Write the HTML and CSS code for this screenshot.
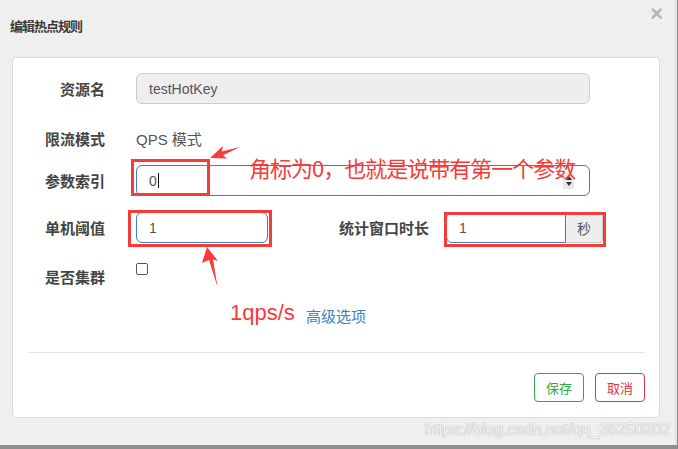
FILE: index.html
```html
<!DOCTYPE html>
<html>
<head>
<meta charset="utf-8">
<link rel="stylesheet" href="styles.css">
</head>
<body>
<div class="modal">
  <div class="header">
    <h4 class="title">编辑热点规则</h4>
    <span class="close">×</span>
  </div>
  <div class="panel">
    <div class="form">
      <div class="row r1">
        <label class="lbl">资源名</label>
        <div class="input disabled wide">testHotKey</div>
      </div>
      <div class="row r2">
        <label class="lbl">限流模式</label>
        <div class="static">QPS 模式</div>
      </div>
      <div class="row r3">
        <label class="lbl">参数索引</label>
        <div class="input focus wide">0<span class="caret"></span>
          <span class="spinner"><span class="up"></span><span class="down"></span></span>
        </div>
      </div>
      <div class="row r4">
        <label class="lbl">单机阈值</label>
        <div class="input focus small">1</div>
        <label class="lbl lbl2">统计窗口时长</label>
        <div class="group">
          <div class="input focus gi">1</div>
          <div class="addon">秒</div>
        </div>
      </div>
      <div class="row r5">
        <label class="lbl">是否集群</label>
        <span class="checkbox"></span>
      </div>
      <div class="row r6">
        <a class="link">高级选项</a>
      </div>
    </div>
    <div class="divider"></div>
    <div class="footer">
      <button class="btn save">保存</button>
      <button class="btn cancel">取消</button>
    </div>
  </div>

  <div class="mark box1"></div>
  <div class="mark box2"></div>
  <div class="mark box3"></div>
  <svg class="arrows" width="678" height="449" viewBox="0 0 678 449">
    <polygon fill="#f63b3b" points="210,158 227,158.5 223,155.3 240,147 221.8,151.6 223,146"/>
    <polygon fill="#f63b3b" points="207,247 218,261 213,259.5 217.5,287 209,260 202,263"/>
  </svg>
  <div class="note note1">角标为0，也就是说带有第一个参数</div>
  <div class="note note2">1qps/s</div>
  <div class="watermark">https://blog.csdn.net/qq_36250202</div>
</div>
</body>
</html>
```

FILE: styles.css
```css
* { box-sizing: border-box; }
html, body { margin: 0; padding: 0; }
body {
  background: #8f8f8f;
  width: 678px;
  height: 449px;
  overflow: hidden;
  font-family: "Liberation Sans", "Noto Sans CJK SC", sans-serif;
  color: #555;
}
.modal {
  position: relative;
  width: 677px;
  height: 445px;
  background: #efefef;
  border-right: 2px solid #e2e2e2;
}
.header {
  height: 57px;
  display: flex;
  align-items: flex-start;
  justify-content: space-between;
}
.title {
  margin: 17px 0 0 10px;
  font-size: 13px;
  line-height: 17px;
  font-weight: bold;
  letter-spacing: -1px;
  color: #3a3a3a;
  font-family: "Noto Sans CJK SC", sans-serif;
}
.close {
  margin: 1px 12px 0 0;
  font-size: 22px;
  line-height: 26px;
  font-weight: bold;
  color: #b4b4b4;
}
.panel {
  margin-left: 12px;
  width: 648px;
  height: 361px;
  background: #fff;
  border: 1px solid #dcdcdc;
  border-radius: 4px;
}
.form { padding-top: 15px; }
.row {
  display: flex;
  align-items: center;
  height: 31px;
}
.r2 { margin-top: 19px; }
.r3 { margin-top: 11px; }
.r4 { margin-top: 16px; }
.r5 { margin-top: 19px; align-items: flex-start; }
.r6 { margin-top: 7px; }
.lbl {
  width: 92px;
  margin-right: 31px;
  text-align: right;
  font-family: "Noto Sans CJK SC", sans-serif;
  font-weight: bold;
  font-size: 15px;
  color: #444;
}
.r5 .lbl { line-height: 30px; }
.lbl2 { margin-left: 69px; margin-right: 17px; }
.static {
  font-size: 15px;
  color: #555;
}
.input {
  position: relative;
  height: 31px;
  border: 1px solid #ccc;
  border-radius: 6px;
  padding-left: 12px;
  display: flex;
  align-items: center;
  font-size: 14px;
  color: #555;
  background: #fff;
}
.disabled { background: #eee; }
.focus { border-color: #3d7fbf; }
.wide { width: 454px; }
.small { width: 132px; }
.caret {
  display: inline-block;
  width: 1px;
  height: 15px;
  margin-left: 1px;
  background: #111;
}
.spinner {
  position: absolute;
  right: 15px;
  top: 6px;
  width: 11px;
  height: 17px;
  background: #e9e9e9;
  display: flex;
  flex-direction: column;
  align-items: center;
  justify-content: center;
  gap: 2px;
}
.spinner .up {
  width: 0; height: 0;
  border-left: 3.5px solid transparent;
  border-right: 3.5px solid transparent;
  border-bottom: 4px solid #333;
}
.spinner .down {
  width: 0; height: 0;
  border-left: 3.5px solid transparent;
  border-right: 3.5px solid transparent;
  border-top: 4px solid #333;
}
.group { display: flex; }
.gi {
  width: 120px;
  border-radius: 6px 0 0 6px;
}
.addon {
  width: 37px;
  height: 31px;
  border: 1px solid #ccc;
  border-left: none;
  border-radius: 0 4px 4px 0;
  background: #eee;
  display: flex;
  align-items: center;
  justify-content: center;
  font-size: 14px;
  color: #555;
  font-family: "Noto Sans CJK SC", sans-serif;
}
.checkbox {
  margin-top: 1px;
  width: 12px;
  height: 12px;
  border: 1px solid #555;
  border-radius: 2px;
  background: #fff;
}
.link {
  margin-left: 293px;
  font-size: 15px;
  color: #3b7fc4;
  font-family: "Noto Sans CJK SC", sans-serif;
}
.divider {
  margin: 21px 14px 0 15px;
  height: 1px;
  background: #e3e3e3;
}
.footer {
  display: flex;
  justify-content: flex-end;
  gap: 11px;
  margin: 20px 14px 0 0;
}
.btn {
  width: 50px;
  height: 29px;
  background: #fff;
  border: 1px solid;
  border-radius: 4px;
  font-size: 13px;
  font-family: "Noto Sans CJK SC", sans-serif;
  padding: 0;
}
.save { color: #2ea84a; border-color: #2ea84a; }
.cancel { color: #dc3545; border-color: #dc3545; }

.mark {
  position: absolute;
  border: 3px solid #f63b3b;
}
.box1 { left: 131px; top: 159px; width: 79px; height: 37px; }
.box2 { left: 128px; top: 210px; width: 144px; height: 37px; }
.box3 { left: 444px; top: 212px; width: 162px; height: 35px; }
.arrows { position: absolute; left: 0; top: 0; }
.note {
  position: absolute;
  color: #f63b3b;
  white-space: nowrap;
}
.note1 {
  left: 249px;
  top: 152px;
  font-size: 22px;
  line-height: 30px;
  letter-spacing: -1px;
  font-family: "Noto Sans CJK SC", sans-serif;
}
.note2 {
  left: 230px;
  top: 299px;
  font-size: 22px;
  line-height: 28px;
  font-family: "Liberation Sans", sans-serif;
}
.watermark {
  position: absolute;
  left: 425px;
  top: 420px;
  font-size: 16px;
  line-height: 20px;
  color: #f4f4f4;
  text-shadow: 0 0 1px #a8a8a8, 0 0 1px #b8b8b8;
  white-space: nowrap;
}
```
